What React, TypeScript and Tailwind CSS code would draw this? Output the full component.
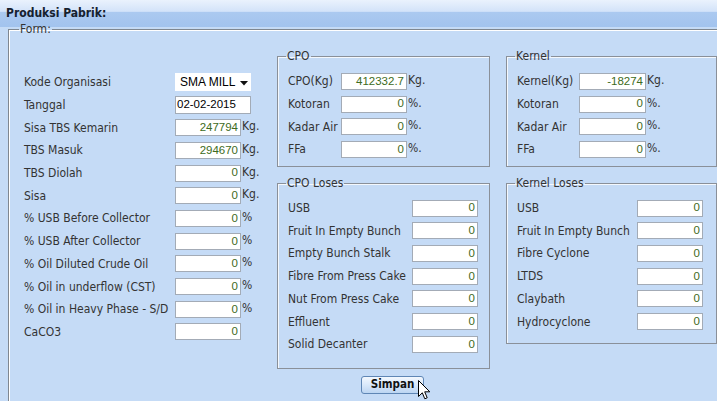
import React from "react";

const LABEL = "font-['DejaVu_Sans_Condensed','DejaVu_Sans',sans-serif] text-[12px] text-[#333] whitespace-nowrap";

type Field = { label: string; value: string; unit?: string };

function NumBox({ value, width }: { value: string; width: string }) {
  return (
    <div
      className={`${width} h-[17px] bg-white border border-[#a3abb6] flex items-center justify-end pr-[2px] font-['Liberation_Sans',sans-serif] text-[11.5px] text-[#3d6b22]`}
    >
      {value}
    </div>
  );
}

function Row({ f, labelW, boxW }: { f: Field; labelW: string; boxW: string }) {
  return (
    <div className="h-[22.7px] flex items-center">
      <div className={`${labelW} ${LABEL}`}>{f.label}</div>
      <NumBox value={f.value} width={boxW} />
      {f.unit && <span className={`${LABEL} ml-[1px] -mt-[3px]`}>{f.unit}</span>}
    </div>
  );
}

function Group({
  title,
  rows,
  labelW,
  boxW,
  className,
}: {
  title: string;
  rows: Field[];
  labelW: string;
  boxW: string;
  className: string;
}) {
  return (
    <fieldset
      className={`border border-[#8a9099] shadow-[inset_1px_1px_0_#f4f8fd] pl-[10px] ${className}`}
    >
      <legend className={`${LABEL} leading-[13px] px-[1px] -ml-[2px]`}>{title}</legend>
      {rows.map((f) => (
        <Row key={f.label} f={f} labelW={labelW} boxW={boxW} />
      ))}
    </fieldset>
  );
}

const leftRows: Field[] = [
  { label: "Sisa TBS Kemarin", value: "247794", unit: "Kg." },
  { label: "TBS Masuk", value: "294670", unit: "Kg." },
  { label: "TBS Diolah", value: "0", unit: "Kg." },
  { label: "Sisa", value: "0", unit: "Kg." },
  { label: "% USB Before Collector", value: "0", unit: "%" },
  { label: "% USB After Collector", value: "0", unit: "%" },
  { label: "% Oil Diluted Crude Oil", value: "0", unit: "%" },
  { label: "% Oil in underflow (CST)", value: "0", unit: "%" },
  { label: "% Oil in Heavy Phase - S/D", value: "0", unit: "%" },
  { label: "CaCO3", value: "0" },
];

const cpo: Field[] = [
  { label: "CPO(Kg)", value: "412332.7", unit: "Kg." },
  { label: "Kotoran", value: "0", unit: "%." },
  { label: "Kadar Air", value: "0", unit: "%." },
  { label: "FFa", value: "0", unit: "%." },
];

const kernel: Field[] = [
  { label: "Kernel(Kg)", value: "-18274", unit: "Kg." },
  { label: "Kotoran", value: "0", unit: "%." },
  { label: "Kadar Air", value: "0", unit: "%." },
  { label: "FFa", value: "0", unit: "%." },
];

const cpoLoses: Field[] = [
  { label: "USB", value: "0" },
  { label: "Fruit In Empty Bunch", value: "0" },
  { label: "Empty Bunch Stalk", value: "0" },
  { label: "Fibre From Press Cake", value: "0" },
  { label: "Nut From Press Cake", value: "0" },
  { label: "Effluent", value: "0" },
  { label: "Solid Decanter", value: "0" },
];

const kernelLoses: Field[] = [
  { label: "USB", value: "0" },
  { label: "Fruit In Empty Bunch", value: "0" },
  { label: "Fibre Cyclone", value: "0" },
  { label: "LTDS", value: "0" },
  { label: "Claybath", value: "0" },
  { label: "Hydrocyclone", value: "0" },
];

export default function App() {
  return (
    <div className="w-[717px] h-[401px] overflow-hidden bg-[#c5dbf6] relative">
      {/* header */}
      <div className="h-[27px] bg-[linear-gradient(to_bottom,#eaf2fd_0%,#d3e3f9_42%,#abc9f0_46%,#a2c3ee_100%)] pl-[6px] pt-[6px]">
        <div className="font-['DejaVu_Sans_Condensed','DejaVu_Sans',sans-serif] font-bold text-[12px] leading-[14px] text-[#15202e]">
          Produksi Pabrik:
        </div>
      </div>

      <fieldset className="ml-[8px] -mt-[4px] w-[730px] h-[400px] border border-[#7f8790] shadow-[inset_1px_1px_0_#fff] pl-[15px]">
        <legend className={`${LABEL} leading-[12px] px-[1px] -ml-[5px]`}>Form:</legend>
        <div className="flex">
          {/* left column */}
          <div className="w-[253px] pt-[36px]">
            <div className="h-[22.7px] flex items-center">
              <div className={`w-[151px] ${LABEL}`}>Kode Organisasi</div>
              <div className="w-[76px] h-[18px] bg-white flex items-center justify-between pl-[5px] pr-[3px] font-['Liberation_Sans',sans-serif] text-[12px] text-black">
                <span>SMA MILL</span>
                <svg width="8" height="5" viewBox="0 0 8 5" className="mt-[2px]">
                  <path d="M0 0 H8 L4 4.5 Z" fill="#111" />
                </svg>
              </div>
            </div>
            <div className="h-[22.7px] flex items-center">
              <div className={`w-[151px] ${LABEL}`}>Tanggal</div>
              <div className="w-[76px] h-[18px] bg-white border border-[#a3abb6] flex items-center pl-[1px] font-['Liberation_Sans',sans-serif] text-[11.5px] text-black">
                02-02-2015
              </div>
            </div>
            {leftRows.map((f) => (
              <Row key={f.label} f={f} labelW="w-[151px]" boxW="w-[66px]" />
            ))}
          </div>

          {/* middle column */}
          <div className="w-[213px]">
            <Group title="CPO" rows={cpo} labelW="w-[53px]" boxW="w-[66px]" className="mt-[15px] pt-[7px] pb-[5px]" />
            <Group
              title="CPO Loses"
              rows={cpoLoses}
              labelW="w-[124px]"
              boxW="w-[66px]"
              className="mt-[10px] pt-[7px] pb-[12px]"
            />
            <div className="ml-[84px] mt-[7px] relative w-[63px]">
              <button className="block w-[63px] h-[18px] rounded-[3px] border border-[#5f86b5] bg-[linear-gradient(to_bottom,#f3f8fe_0%,#d9e8fa_50%,#bcd5f2_100%)] font-['DejaVu_Sans_Condensed','DejaVu_Sans',sans-serif] font-bold text-[11.5px] text-[#111] leading-none">
                Simpan
              </button>
              <svg
                width="13"
                height="21"
                viewBox="0 0 13 21"
                className="absolute left-[57px] top-[4px]"
              >
                <path
                  d="M0.5 0.5 L0.5 16.5 L4.3 12.8 L6.8 18.8 L9.2 17.8 L6.7 11.8 L11.8 11.8 Z"
                  fill="#fff"
                  stroke="#000"
                  strokeWidth="1"
                  strokeLinejoin="miter"
                />
              </svg>
            </div>
          </div>

          {/* right column */}
          <div className="w-[211px] ml-[16px]">
            <Group title="Kernel" rows={kernel} labelW="w-[62px]" boxW="w-[67px]" className="mt-[15px] pt-[7px] pb-[5px]" />
            <Group
              title="Kernel Loses"
              rows={kernelLoses}
              labelW="w-[120px]"
              boxW="w-[66px]"
              className="mt-[10px] pt-[7px] pb-[10px]"
            />
          </div>
        </div>
      </fieldset>
    </div>
  );
}
